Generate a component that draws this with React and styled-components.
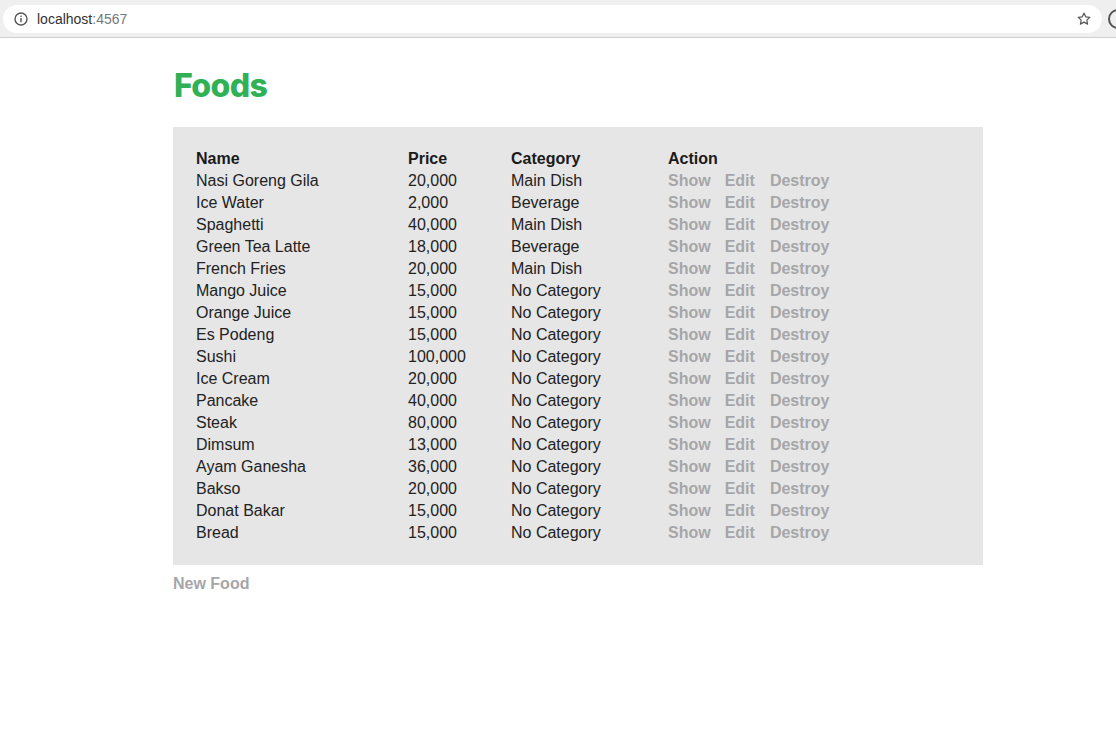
import React from "react";
import styled, { createGlobalStyle } from "styled-components";

const Global = createGlobalStyle`
  html, body { margin: 0; padding: 0; background: #fff; }
  body { font-family: "Liberation Sans", Arial, sans-serif; }
`;

const Chrome = styled.div`
  height: 37px;
  background: #efefef;
  border-bottom: 1px solid #cfcfcf;
  display: flex;
  align-items: center;
  padding: 0 0 0 3px;
  gap: 6px;
  overflow: hidden;
`;

const AddressPill = styled.div`
  flex: 1;
  height: 28px;
  background: #fff;
  border-radius: 14px;
  display: flex;
  align-items: center;
  padding: 0 10px 0 11px;
  gap: 9px;
`;

const Url = styled.span`
  font-family: "Liberation Sans", Arial, sans-serif;
  font-size: 14px;
  color: #333;
  flex: 1;
`;

const Port = styled.span`
  color: #777;
`;

const Profile = styled.div`
  width: 16px;
  height: 16px;
  border-radius: 50%;
  border: 2px solid #555;
  margin-right: -12px;
  flex-shrink: 0;
`;

const Main = styled.main`
  width: 810px;
  margin-left: 173px;
  padding-top: 33px;
`;

const Title = styled.h1`
  margin: 0 0 26px 1px;
  font-family: Inter, "Liberation Sans", sans-serif;
  font-weight: 800;
  font-size: 32px;
  line-height: 30px;
  letter-spacing: -0.6px;
  color: #30b155;
`;

const Panel = styled.div`
  background: #e6e6e6;
  padding: 21px 0 21px 23px;
`;

const Table = styled.table`
  border-collapse: collapse;
  font-size: 16px;
  color: #222;
`;

const Th = styled.th`
  text-align: left;
  font-weight: 700;
  color: #1a1a1a;
  padding: 0;
  height: 22px;
  width: ${(p) => p.$w}px;
`;

const Td = styled.td`
  padding: 0;
  height: 22px;
`;

const ActionLink = styled.a`
  font-weight: 700;
  color: #a6a6a9;
  text-decoration: none;
  margin-right: ${(p) => p.$gap ?? 14}px;
`;

const NewLink = styled.a`
  display: inline-block;
  margin-top: 10px;
  font-size: 16px;
  font-weight: 700;
  color: #a6a6a9;
  text-decoration: none;
`;

const foods = [
  ["Nasi Goreng Gila", "20,000", "Main Dish"],
  ["Ice Water", "2,000", "Beverage"],
  ["Spaghetti", "40,000", "Main Dish"],
  ["Green Tea Latte", "18,000", "Beverage"],
  ["French Fries", "20,000", "Main Dish"],
  ["Mango Juice", "15,000", "No Category"],
  ["Orange Juice", "15,000", "No Category"],
  ["Es Podeng", "15,000", "No Category"],
  ["Sushi", "100,000", "No Category"],
  ["Ice Cream", "20,000", "No Category"],
  ["Pancake", "40,000", "No Category"],
  ["Steak", "80,000", "No Category"],
  ["Dimsum", "13,000", "No Category"],
  ["Ayam Ganesha", "36,000", "No Category"],
  ["Bakso", "20,000", "No Category"],
  ["Donat Bakar", "15,000", "No Category"],
  ["Bread", "15,000", "No Category"],
];

export default function App() {
  return (
    <>
      <Global />
      <Chrome>
        <AddressPill>
          <svg width="14" height="14" viewBox="0 0 14 14">
            <circle cx="7" cy="7" r="6" fill="none" stroke="#555" strokeWidth="1.4" />
            <rect x="6.3" y="6" width="1.4" height="4.2" fill="#555" />
            <rect x="6.3" y="3.6" width="1.4" height="1.4" fill="#555" />
          </svg>
          <Url>
            localhost<Port>:4567</Port>
          </Url>
          <svg width="16" height="16" viewBox="0 0 24 24">
            <path
              d="M12 3.2l2.6 5.6 6.1.7-4.5 4.2 1.2 6-5.4-3-5.4 3 1.2-6-4.5-4.2 6.1-.7z"
              fill="none"
              stroke="#555"
              strokeWidth="1.8"
              strokeLinejoin="round"
            />
          </svg>
        </AddressPill>
        <Profile />
      </Chrome>
      <Main>
        <Title>Foods</Title>
        <Panel>
          <Table>
            <thead>
              <tr>
                <Th $w={212}>Name</Th>
                <Th $w={103}>Price</Th>
                <Th $w={157}>Category</Th>
                <Th>Action</Th>
              </tr>
            </thead>
            <tbody>
              {foods.map(([n, p, c]) => (
                <tr key={n}>
                  <Td>{n}</Td>
                  <Td>{p}</Td>
                  <Td>{c}</Td>
                  <Td>
                    <ActionLink href="#">Show</ActionLink>
                    <ActionLink href="#" $gap={15}>Edit</ActionLink>
                    <ActionLink href="#">Destroy</ActionLink>
                  </Td>
                </tr>
              ))}
            </tbody>
          </Table>
        </Panel>
        <NewLink href="#">New Food</NewLink>
      </Main>
    </>
  );
}
